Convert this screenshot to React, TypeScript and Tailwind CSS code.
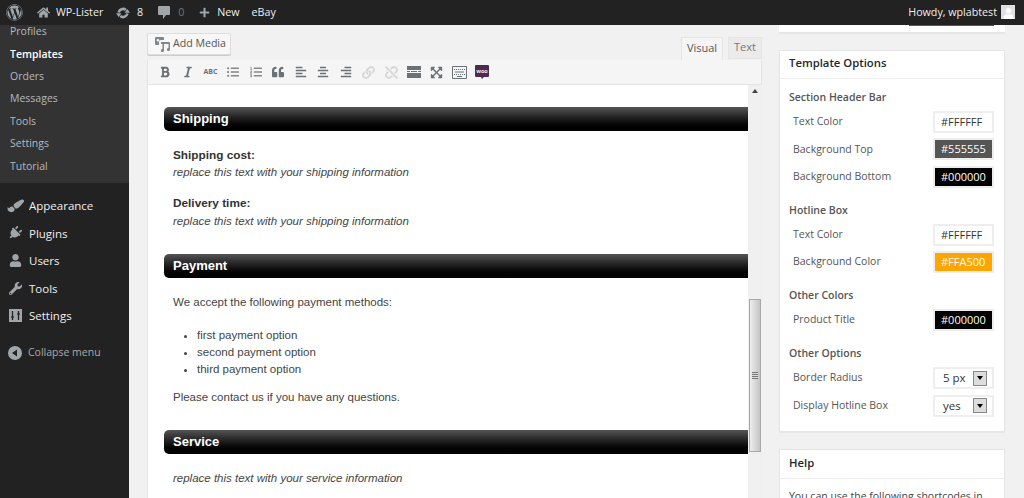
import type { FC, ReactNode } from 'react';
import {
  FaAlignCenter,
  FaAlignLeft,
  FaAlignRight,
  FaBold,
  FaExpandArrowsAlt,
  FaHome,
  FaItalic,
  FaLink,
  FaListOl,
  FaListUl,
  FaPaintBrush,
  FaPlug,
  FaPlus,
  FaQuoteLeft,
  FaUnlink,
  FaUser,
  FaWordpress,
  FaWrench,
} from 'react-icons/fa';

const UpdateIcon = () => (
  <svg width="14" height="14" viewBox="0 0 14 14" className="text-[#a0a5aa]">
    <path fill="none" stroke="currentColor" strokeWidth="2.6" d="M2.6 6.5a4.5 4.5 0 0 1 7.2-2.6M11.4 7.5a4.5 4.5 0 0 1-7.2 2.6" />
    <path fill="currentColor" d="M14 6.8H8.6L11.3 3zM0 7.2h5.4L2.7 11z" />
  </svg>
);

const CommentIcon = () => (
  <svg width="12" height="13" viewBox="0 0 12 13" className="text-[#a0a5aa]">
    <path fill="currentColor" d="M1 0h10a1 1 0 0 1 1 1v7a1 1 0 0 1-1 1H8l-3 4V9H1a1 1 0 0 1-1-1V1a1 1 0 0 1 1-1z" />
  </svg>
);

const SettingsIcon = () => (
  <svg width="13" height="13" viewBox="0 0 13 13" className="text-[#a0a5aa]">
    <path fill="currentColor" d="M0 0h13v13H0z" />
    <path stroke="#222" strokeWidth="1.3" d="M3.5 2v9M9.5 2v9" />
    <path fill="#222" d="M1.7 7.5h3.6L3.5 10zM7.7 5.5h3.6L9.5 3z" />
  </svg>
);

const CollapseIcon = () => (
  <svg width="14" height="14" viewBox="0 0 14 14">
    <circle cx="7" cy="7" r="7" fill="#a0a5aa" />
    <path fill="#222" d="M9 3.5v7L4 7z" />
  </svg>
);

const MediaIcon = () => (
  <svg width="15" height="15" viewBox="0 0 15 15" className="text-[#82878c]">
    <path fill="currentColor" fillRule="evenodd" d="M1 0h7a1 1 0 0 1 1 1v2H6a2 2 0 0 0-2 2v3H1a1 1 0 0 1-1-1V1a1 1 0 0 1 1-1zm2 2a1.3 1.3 0 1 0 0 2.6A1.3 1.3 0 0 0 3 2z" />
    <path fill="currentColor" d="M6 5h8a1 1 0 0 1 1 1v6.5a1.6 1.6 0 1 1-1.5-1.6V7H9v6.5a1.6 1.6 0 1 1-1.5-1.6V7H6z" />
  </svg>
);

const MoreIcon = () => (
  <svg width="14" height="12" viewBox="0 0 14 12">
    <path fill="currentColor" d="M0 0h14v4H0zM0 5h3v1H0zM4 5h6v1H4zM11 5h3v1h-3zM0 7h14v5H0z" />
  </svg>
);

const KeyboardIcon = () => (
  <svg width="15" height="13" viewBox="0 0 15 13">
    <path fill="none" stroke="currentColor" d="M.5.5h14v12H.5z" />
    <path stroke="currentColor" strokeDasharray="1 1" d="M2 3.5h11M2 8.5h11" />
    <path stroke="currentColor" d="M3 6h9M5 10.5h5" />
  </svg>
);

const WooIcon = () => (
  <svg width="14" height="15" viewBox="0 0 14 15">
    <path fill="#4f2b50" d="M1 0h12a1 1 0 0 1 1 1v10a1 1 0 0 1-1 1H9l-2 2-1-2H1a1 1 0 0 1-1-1V1a1 1 0 0 1 1-1z" />
    <text x="7" y="8" textAnchor="middle" fontSize="5.5" fontWeight="700" fill="#f1e6f0">
      woo
    </text>
  </svg>
);

const AdminBar = () => (
  <header className="relative z-10 flex h-[25px] shrink-0 items-center justify-between whitespace-nowrap bg-[#222] pl-[6px] pr-[9px] text-[10.7px] text-[#eee]">
    <div className="flex items-center">
      <FaWordpress className="text-[17px] text-[#a0a5aa]" />
      <FaHome className="ml-[14px] text-[13px] text-[#a0a5aa]" />
      <span className="ml-[6px] w-[47px]">WP-Lister</span>
      <span className="ml-[13px]">
        <UpdateIcon />
      </span>
      <span className="ml-[7px]">8</span>
      <span className="ml-[15px]">
        <CommentIcon />
      </span>
      <span className="ml-[8px] text-[#777]">0</span>
      <FaPlus className="ml-[15px] text-[11px] text-[#a0a5aa]" />
      <span className="ml-[7px]">New</span>
      <span className="ml-[12px]">eBay</span>
    </div>
    <div className="flex items-center gap-[4px]">
      <span>Howdy, wplabtest</span>
      <div className="flex h-[14px] w-[14px] items-end justify-center overflow-hidden bg-[#e0e0e0]">
        <FaUser className="text-[11px] text-white" />
      </div>
    </div>
  </header>
);

const subItems = ['Profiles', 'Templates', 'Orders', 'Messages', 'Tools', 'Settings', 'Tutorial'];

const mainItems: { label: string; icon: ReactNode }[] = [
  { label: 'Appearance', icon: <FaPaintBrush className="rotate-12 text-[15px]" /> },
  { label: 'Plugins', icon: <FaPlug className="rotate-45 text-[14px]" /> },
  { label: 'Users', icon: <FaUser className="text-[13px]" /> },
  { label: 'Tools', icon: <FaWrench className="text-[13px]" /> },
  { label: 'Settings', icon: <SettingsIcon /> },
];

const Sidebar = () => (
  <aside className="flex w-[129px] shrink-0 flex-col bg-[#222]">
    <div className="h-[158px] shrink-0 overflow-hidden bg-[#333]">
      {subItems.map((item) => (
        <div
          key={item}
          className={`flex h-[22.4px] translate-y-[-4px] items-center pl-[10px] text-[10.5px] ${
            item === 'Templates' ? 'font-semibold text-white' : 'text-[#b4b9be]'
          }`}
        >
          {item}
        </div>
      ))}
    </div>
    <nav className="mt-[9px]">
      {mainItems.map((item) => (
        <div key={item.label} className="flex h-[27.5px] items-center text-[11.5px] text-[#eee]">
          <span className="flex w-[29px] justify-center pl-[1px] text-[#a0a5aa]">{item.icon}</span>
          {item.label}
        </div>
      ))}
    </nav>
    <div className="mt-[9.5px] flex h-[28px] items-center gap-[6px] pl-[8px] text-[10.5px] text-[#aaa]">
      <CollapseIcon />
      Collapse menu
    </div>
  </aside>
);

const toolbar: ReactNode[] = [
  <FaBold key="b" className="text-[12px]" />,
  <FaItalic key="i" className="text-[12px]" />,
  <span key="abc" className="text-[7px] font-bold">ABC</span>,
  <FaListUl key="ul" className="text-[12px] text-[#888]" />,
  <FaListOl key="ol" className="text-[12px] text-[#888]" />,
  <FaQuoteLeft key="q" className="text-[12px]" />,
  <FaAlignLeft key="al" className="text-[12px]" />,
  <FaAlignCenter key="ac" className="text-[12px]" />,
  <FaAlignRight key="ar" className="text-[12px]" />,
  <FaLink key="l" className="text-[13px] text-[#d8d8d8]" />,
  <FaUnlink key="u" className="text-[13px] text-[#d8d8d8]" />,
  <MoreIcon key="m" />,
  <FaExpandArrowsAlt key="e" className="text-[13px]" />,
  <KeyboardIcon key="k" />,
  <WooIcon key="w" />,
];

const SectionBar: FC<{ title: string }> = ({ title }) => (
  <div className="flex h-[24px] items-center rounded-l-[5px] bg-gradient-to-b from-[#555555] to-black pb-[1px] pl-[9px] text-[13px] font-bold text-white">
    {title}
  </div>
);

const TemplateBody = () => (
  <div className="pl-[16px] pt-[22px] font-['Liberation_Sans',Arial,sans-serif] text-[11.5px] leading-[17px] text-[#444]">
    <SectionBar title="Shipping" />
    <div className="pl-[9px] pt-[16px]">
      <p className="text-[11.8px] font-bold text-[#333]">Shipping cost:</p>
      <p className="italic">replace this text with your shipping information</p>
      <p className="mt-[14px] text-[11.8px] font-bold text-[#333]">Delivery time:</p>
      <p className="mt-[1px] italic">replace this text with your shipping information</p>
    </div>
    <div className="mt-[24px]">
      <SectionBar title="Payment" />
    </div>
    <div className="pl-[9px] pt-[16px]">
      <p>We accept the following payment methods:</p>
      <ul className="mt-[16px] list-disc pl-[24px]">
        <li>first payment option</li>
        <li>second payment option</li>
        <li>third payment option</li>
      </ul>
      <p className="mt-[11px]">Please contact us if you have any questions.</p>
    </div>
    <div className="mt-[24px]">
      <SectionBar title="Service" />
    </div>
    <p className="pl-[9px] pt-[16px] italic">replace this text with your service information</p>
  </div>
);

const Scrollbar = () => (
  <div className="flex w-[14px] shrink-0 flex-col items-center bg-[#f0f0f0]">
    <div className="mt-[4px] h-0 w-0 border-x-[3px] border-b-[4px] border-x-transparent border-b-[#444]" />
    <div className="mt-[206px] flex h-[153px] w-[12px] items-center justify-center border border-[#a8a8a8] bg-gradient-to-r from-[#eeeeee] to-[#c4c4c8]">
      <div className="h-[7px] w-[6px] bg-[repeating-linear-gradient(to_bottom,#777_0,#777_1px,#ddd_1px,#ddd_2px)]" />
    </div>
  </div>
);

const Editor = () => (
  <main className="ml-[18px] flex w-[615px] shrink-0 flex-col pt-[8px]">
    <div className="flex h-[27px] shrink-0 justify-between">
      <button className="flex h-[22px] w-[84px] items-center gap-[3px] rounded-[2px] border border-[#ddd] bg-[#f7f7f7] pl-[7px] text-[10.6px] text-[#555] shadow-[0_1px_0_#ccc]">
        <MediaIcon />
        Add Media
      </button>
      <div className="flex items-start gap-[5px] pt-[4px] text-[11px] text-[#555]">
        <div className="flex h-[23px] w-[42px] items-center justify-center border border-b-0 border-[#e5e5e5] bg-[#f5f5f5] pb-[1px]">Visual</div>
        <div className="flex h-[22px] w-[34px] items-center justify-center border border-[#e5e5e5] bg-[#ebebeb] pb-[1px] text-[#777]">Text</div>
      </div>
    </div>
    <div className="flex h-[25px] shrink-0 items-center border-x border-b border-[#e5e5e5] bg-[#f5f5f5] pl-[6px] text-[#6c7176]">
      {toolbar.map((icon, i) => (
        <span key={i} className="flex w-[22.6px] justify-center">
          {icon}
        </span>
      ))}
    </div>
    <div className="flex min-h-0 flex-1 border-l border-[#e5e5e5] bg-white">
      <div className="min-w-0 flex-1 overflow-hidden">
        <TemplateBody />
      </div>
      <Scrollbar />
    </div>
  </main>
);

type Row = { label: string; value: string; kind?: 'select' | 'color'; bg?: string; fg?: string };

const ColorField: FC<{ row: Row }> = ({ row }) => (
  <div
    className={`flex h-[22px] w-[61px] items-center border-2 border-[#eeeeee] pl-[6px] text-[11px] ${
      row.bg ?? 'bg-white'
    } ${row.fg ?? 'text-[#333]'}`}
  >
    {row.value}
  </div>
);

const SelectField: FC<{ row: Row }> = ({ row }) => (
  <div className="flex h-[22px] w-[61px] items-center justify-between border-2 border-[#eeeeee] bg-white pl-[8px] pr-[5px] text-[11.5px] text-[#333]">
    {row.value}
    <span className="flex h-[15px] w-[14px] items-center justify-center border border-[#888] bg-[#ddd]">
      <span className="h-0 w-0 border-x-[3px] border-t-[4px] border-x-transparent border-t-black" />
    </span>
  </div>
);

const sections: { title: string; rows: Row[] }[] = [
  {
    title: 'Section Header Bar',
    rows: [
      { label: 'Text Color', value: '#FFFFFF' },
      { label: 'Background Top', value: '#555555', bg: 'bg-[#555555]', fg: 'text-white' },
      { label: 'Background Bottom', value: '#000000', bg: 'bg-black', fg: 'text-white' },
    ],
  },
  {
    title: 'Hotline Box',
    rows: [
      { label: 'Text Color', value: '#FFFFFF' },
      { label: 'Background Color', value: '#FFA500', bg: 'bg-[#ffa500]', fg: 'text-white' },
    ],
  },
  {
    title: 'Other Colors',
    rows: [{ label: 'Product Title', value: '#000000', bg: 'bg-black', fg: 'text-white' }],
  },
  {
    title: 'Other Options',
    rows: [
      { label: 'Border Radius', value: '5 px', kind: 'select' },
      { label: 'Display Hotline Box', value: 'yes', kind: 'select' },
    ],
  },
];

const RightColumn = () => (
  <aside className="ml-[17px] flex w-[226px] shrink-0 flex-col">
    <div className="h-[8px] shrink-0 border-b border-[#e5e5e5] bg-white shadow-[0_1px_1px_rgba(0,0,0,0.04)]">
      <div className="ml-[130px] h-px w-[85px] bg-[#0073aa]" />
    </div>
    <section className="mt-[17px] h-[382px] shrink-0 border border-[#e5e5e5] bg-white shadow-[0_1px_1px_rgba(0,0,0,0.04)]">
      <h2 className="flex h-[28px] items-center border-b border-[#eeeeee] pb-[2px] pl-[9px] text-[11.3px] font-semibold text-[#23282d]">
        Template Options
      </h2>
      <div className="pl-[9px] pr-[10px] pt-[12px]">
        {sections.map((section) => (
          <div key={section.title} className="mb-[13.3px]">
            <h3 className="flex h-[14px] items-center text-[10.5px] font-semibold text-[#555]">{section.title}</h3>
            <div className="mt-[3.3px]">
              {section.rows.map((row) => (
                <div key={row.label + row.value} className="flex h-[27.4px] items-center justify-between pl-[4px] text-[10.5px] text-[#555]">
                  <span>{row.label}</span>
                  {row.kind === 'select' ? <SelectField row={row} /> : <ColorField row={row} />}
                </div>
              ))}
            </div>
          </div>
        ))}
      </div>
    </section>
    <section className="mt-[17px] h-[60px] shrink-0 border border-[#e5e5e5] bg-white">
      <h2 className="flex h-[29px] items-center border-b border-[#eeeeee] pb-[1px] pl-[9px] text-[11.3px] font-semibold text-[#23282d]">Help</h2>
      <p className="whitespace-nowrap pl-[9px] pt-[10px] text-[10.5px] text-[#444]">You can use the following shortcodes in</p>
    </section>
  </aside>
);

export default function App() {
  return (
    <div className="flex h-[498px] w-[1024px] flex-col overflow-hidden bg-[#f1f1f1] font-['Open_Sans',sans-serif]">
      <AdminBar />
      <div className="flex min-h-0 flex-1">
        <Sidebar />
        <Editor />
        <RightColumn />
      </div>
    </div>
  );
}
